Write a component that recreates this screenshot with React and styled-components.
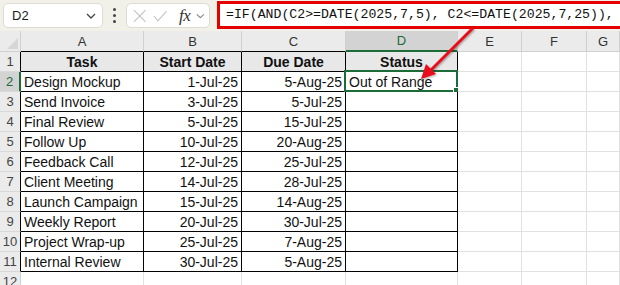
import React from 'react'
import styled, { createGlobalStyle } from 'styled-components'

const Global = createGlobalStyle`
body{
margin:0;
background:#ffffff;
font-family:"Liberation Sans", Arial, sans-serif;
}
`

const Page = styled.div`
position:relative;
width:620px;
height:285px;
overflow:hidden;
background:#fff;
`

const Toolbar = styled.div`
height:31px;
background:#f1f1e9;
display:flex;
align-items:center;
padding-left:3px;
box-sizing:border-box;
`

const NameBox = styled.div`
width:100px;
height:25px;
box-sizing:border-box;
background:#fff;
border:1px solid #dcdcd4;
border-radius:5px;
display:flex;
align-items:center;
justify-content:space-between;
padding:0 6px 0 8px;
font-size:13px;
color:#1b1b1b;
`

const Dots = styled.div`
width:23px;
display:flex;
flex-direction:column;
align-items:center;
gap:3px;
span{
width:3px;
height:3px;
border-radius:50%;
background:#444;
}
`

const FxBox = styled.div`
width:84px;
height:25px;
box-sizing:border-box;
background:#fff;
border:1px solid #dcdcd4;
border-radius:5px;
display:flex;
align-items:center;
padding:0 4px 0 6px;
gap:6px;
`

const Fx = styled.span`
font-family:"Liberation Serif", "Times New Roman", serif;
font-style:italic;
font-size:17px;
color:#333;
margin-left:6px;
letter-spacing:-0.5px;
`

const FormulaBox = styled.div`
margin-left:7px;
flex:1;
height:28px;
margin-top:-2px;
box-sizing:border-box;
background:#fff;
border:3px solid #e50000;
border-right:none;
display:flex;
align-items:center;
padding-left:6px;
font-family:"Liberation Mono", "DejaVu Sans Mono", monospace;
font-size:13.2px;
color:#111;
white-space:nowrap;
overflow:hidden;
`

const Sheet = styled.div`
display:grid;
grid-template-columns:21px 123px 98px 104px 112px 64px 65px 33px;
grid-template-rows:21px;
grid-auto-rows:20px;
`

const ColHead = styled.div`
background:${p => (p.$active ? '#d3d3d3' : '#ebebeb')};
color:${p => (p.$active ? '#1e6b3a' : '#333')};
border-right:1px solid #d0d0d0;
border-bottom:${p => (p.$active ? '2px solid #1e6b3a' : p.$dark ? '1px solid #000' : '1px solid #d0d0d0')};
box-sizing:border-box;
display:flex;
align-items:center;
justify-content:center;
font-size:13px;
`

const Corner = styled.div`
position:relative;
background:#ebebeb;
border-right:1px solid #d0d0d0;
border-bottom:1px solid #d0d0d0;
box-sizing:border-box;
&::after{
content:'';
position:absolute;
right:2px;
bottom:2px;
border-left:11px solid transparent;
border-bottom:11px solid #d6d6d6;
}
`

const RowHead = styled.div`
background:${p => (p.$active ? '#d3d3d3' : '#ebebeb')};
color:${p => (p.$active ? '#1e6b3a' : '#444')};
border-right:${p => (p.$active ? '2px solid #1e6b3a' : p.$dark ? '1px solid #000' : '1px solid #d0d0d0')};
border-bottom:1px solid #d8d8d8;
box-sizing:border-box;
display:flex;
align-items:center;
justify-content:center;
font-size:13px;
`

const Cell = styled.div`
position:relative;
box-sizing:border-box;
background:${p => (p.$head ? '#e8e8e8' : '#fff')};
border-right:1px solid ${p => (p.$dark ? '#000' : '#e1e1e1')};
border-bottom:1px solid ${p => (p.$dark ? '#000' : '#e1e1e1')};
display:flex;
align-items:center;
justify-content:${p => (p.$head ? 'center' : p.$right ? 'flex-end' : 'flex-start')};
padding:0 3px;
font-size:14px;
font-weight:${p => (p.$head ? 700 : 400)};
color:#111;
white-space:nowrap;
`

const Selection = styled.div`
position:absolute;
left:-2px;
top:-2px;
right:-1px;
bottom:-1px;
border:2px solid #1e6b3a;
pointer-events:none;
&::after{
content:'';
position:absolute;
right:-4px;
bottom:-4px;
width:5px;
height:5px;
background:#1e6b3a;
border:1px solid #fff;
}
`

const Arrow = styled.svg`
position:absolute;
left:0;
top:0;
pointer-events:none;
`

const cols = ['A', 'B', 'C', 'D', 'E', 'F', 'G']

const rows = [
  ['Design Mockup', '1-Jul-25', '5-Aug-25', 'Out of Range'],
  ['Send Invoice', '3-Jul-25', '5-Jul-25', ''],
  ['Final Review', '5-Jul-25', '15-Jul-25', ''],
  ['Follow Up', '10-Jul-25', '20-Aug-25', ''],
  ['Feedback Call', '12-Jul-25', '25-Jul-25', ''],
  ['Client Meeting', '14-Jul-25', '28-Jul-25', ''],
  ['Launch Campaign', '15-Jul-25', '14-Aug-25', ''],
  ['Weekly Report', '20-Jul-25', '30-Jul-25', ''],
  ['Project Wrap-up', '25-Jul-25', '7-Aug-25', ''],
  ['Internal Review', '30-Jul-25', '5-Aug-25', ''],
]

const Chevron = () => (
  <svg width="10" height="6" viewBox="0 0 10 6">
    <path d="M1 1l4 4 4-4" fill="none" stroke="#444" strokeWidth="1.3" />
  </svg>
)

const App = () => {
  return (
    <Page>
      <Global />
      <Toolbar>
        <NameBox>
          <span>D2</span>
          <Chevron />
        </NameBox>
        <Dots><span /><span /><span /></Dots>
        <FxBox>
          <svg width="14" height="14" viewBox="0 0 14 14">
            <path d="M1 1l12 12M13 1L1 13" stroke="#c4c4c4" strokeWidth="1.2" />
          </svg>
          <svg width="15" height="12" viewBox="0 0 15 12">
            <path d="M1 6l4 5 9-10" fill="none" stroke="#c4c4c4" strokeWidth="1.2" />
          </svg>
          <Fx>fx</Fx>
          <svg width="9" height="6" viewBox="0 0 10 6">
            <path d="M1 1l4 4 4-4" fill="none" stroke="#888" strokeWidth="1.2" />
          </svg>
        </FxBox>
        <FormulaBox>=IF(AND(C2&gt;=DATE(2025,7,5), C2&lt;=DATE(2025,7,25)),</FormulaBox>
      </Toolbar>
      <Sheet>
        <Corner />
        {cols.map((c, i) => (
          <ColHead key={c} $active={c === 'D'} $dark={i < 4}>{c}</ColHead>
        ))}

        <RowHead $dark>1</RowHead>
        {['Task', 'Start Date', 'Due Date', 'Status'].map(h => (
          <Cell key={h} $head $dark>{h}</Cell>
        ))}
        <Cell /><Cell /><Cell />

        {rows.map((r, i) => (
          <React.Fragment key={i}>
            <RowHead $active={i === 0} $dark>{i + 2}</RowHead>
            <Cell $dark>{r[0]}</Cell>
            <Cell $dark $right>{r[1]}</Cell>
            <Cell $dark $right>{r[2]}</Cell>
            <Cell $dark>
              {r[3]}
              {i === 0 && <Selection />}
            </Cell>
            <Cell /><Cell /><Cell />
          </React.Fragment>
        ))}

        <RowHead>12</RowHead>
        <Cell /><Cell /><Cell /><Cell /><Cell /><Cell /><Cell />
      </Sheet>
      <Arrow width="620" height="285">
        <defs>
          <filter id="sh" x="-20%" y="-20%" width="140%" height="140%">
            <feDropShadow dx="1" dy="1" stdDeviation="0.8" floodColor="#000" floodOpacity="0.35" />
          </filter>
        </defs>
        <g filter="url(#sh)">
          <line x1="473" y1="28" x2="430" y2="71" stroke="#e8101a" strokeWidth="3" />
          <polygon points="421,79 426,64 436,74" fill="#e8101a" />
        </g>
      </Arrow>
    </Page>
  )
}

export default App
